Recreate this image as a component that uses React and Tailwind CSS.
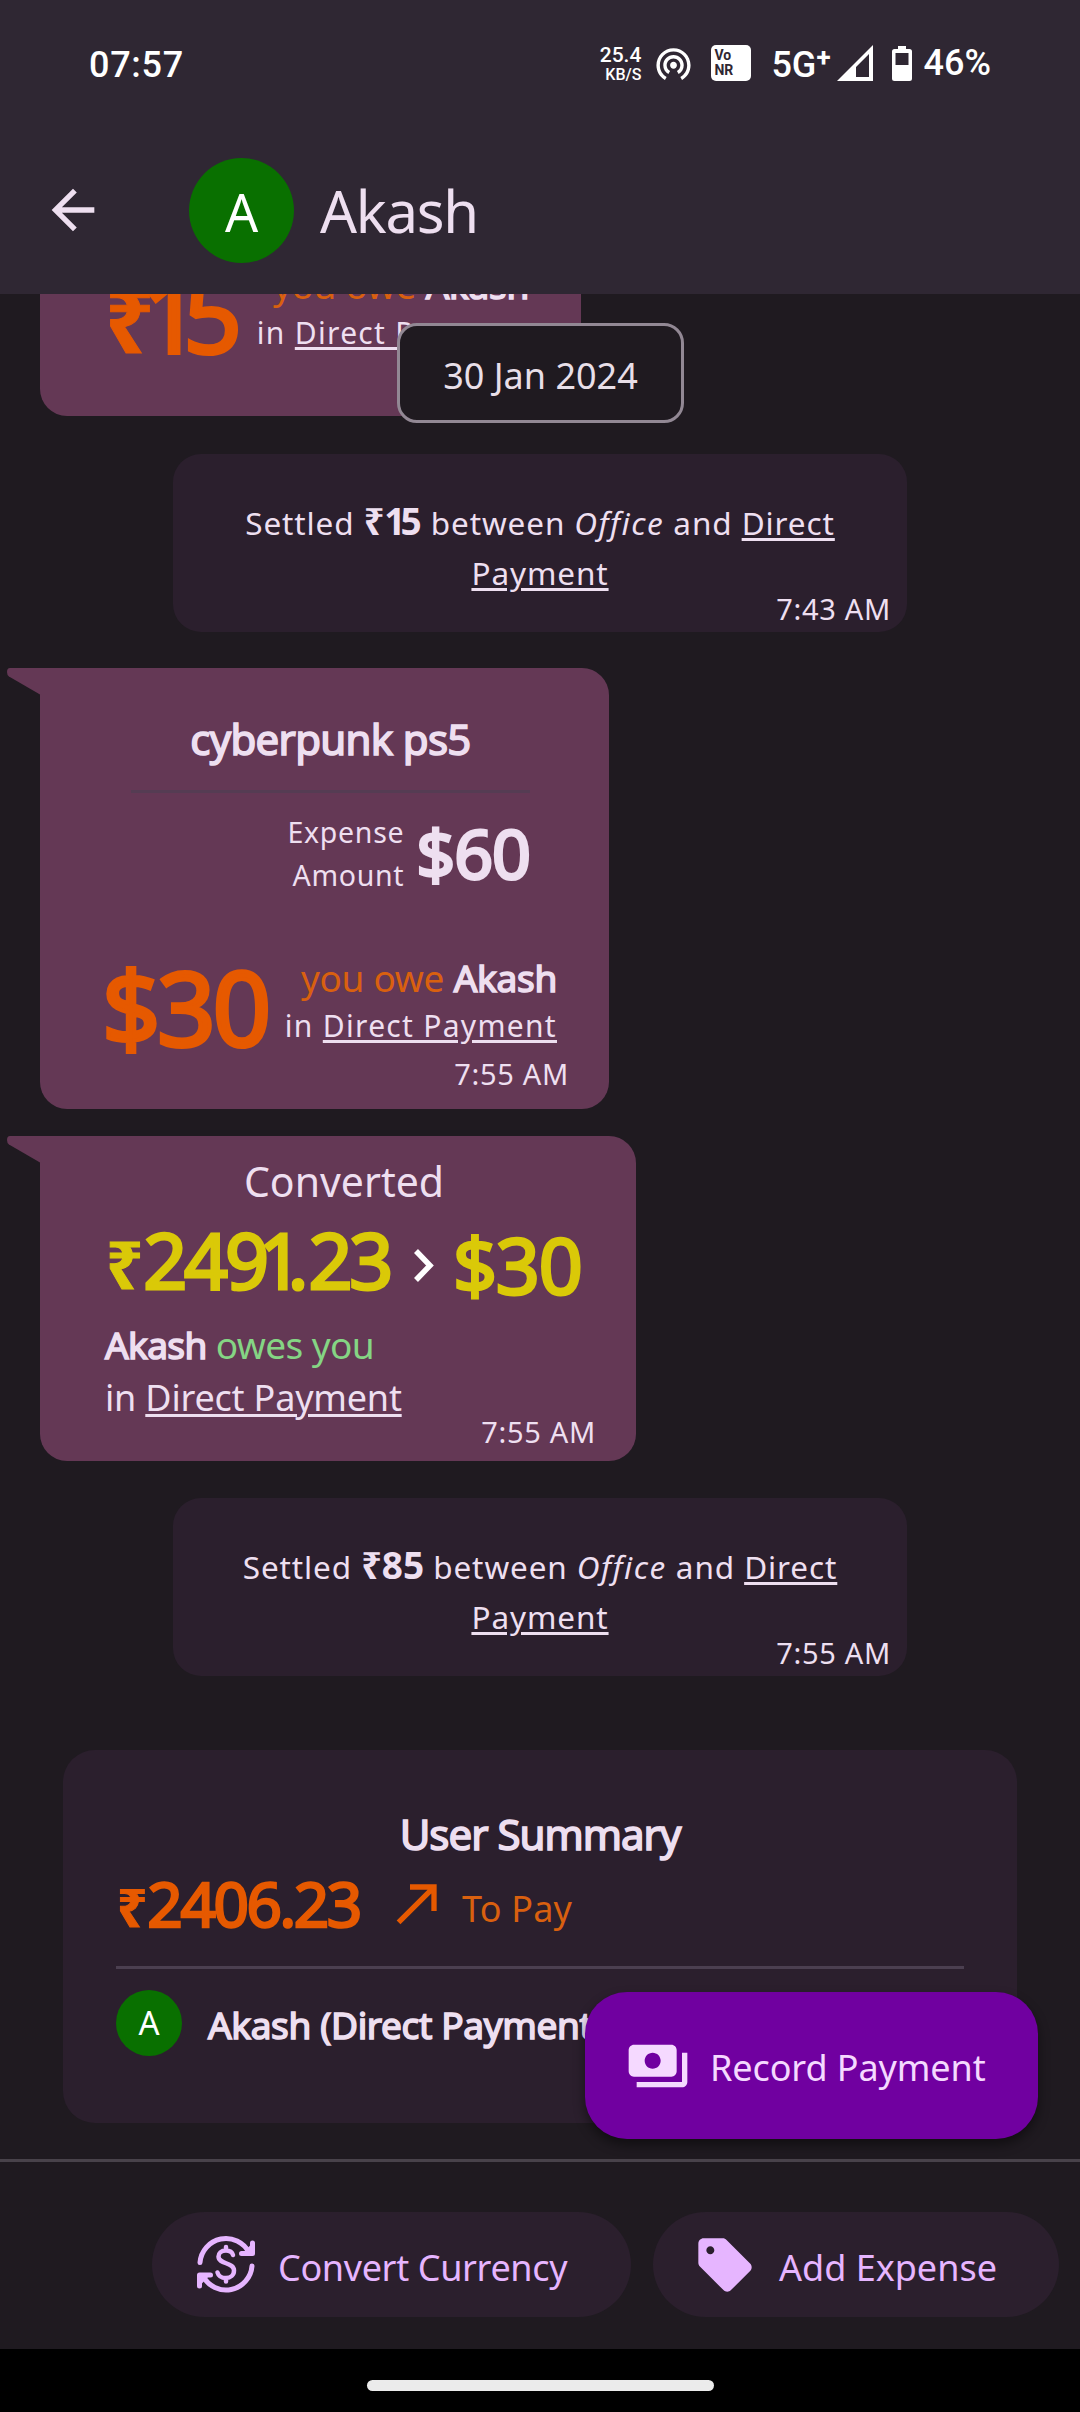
import React from "react";
import { MdArrowBack, MdCallMade, MdPayments, MdSell, MdWifiTethering } from "react-icons/md";

function Tail() {
  return (
    <svg className="absolute top-0 -left-[33px] w-[35px] h-[27px]" viewBox="0 0 35 27" fill="#643855">
      <path d="M3 0H35V27L33 26.5L2 8.5Q0 7 0 4Q0 0 3 0Z" />
    </svg>
  );
}

function CurrencyIcon() {
  return (
    <svg className="h-[60px] w-[60px] shrink-0" viewBox="0 0 60 60" fill="none" stroke="currentColor" strokeWidth="5" strokeLinecap="round" strokeLinejoin="round">
      <path d="M3 27.500A26 26 0 0 1 52 17.500" />
      <path d="M55.500 8V19H45Z" fill="currentColor" stroke="none" />
      <path d="M55.500 8V18.500H44.500" />
      <path d="M55 31A26 26 0 0 1 6 41" />
      <path d="M2.500 51V40H13Z" fill="currentColor" stroke="none" />
      <path d="M2.500 51V40H13.500" />
      <path strokeWidth="4.500" d="M36 20C35 16.500 32 15.500 29 15.500C24 15.500 21.500 18.500 21.500 21.500C21.500 29.500 37 27 37 35.500C37 40 33.500 43 29 43C25 43 21.500 41 20.500 37.500M29 12V15.500M29 43V46.500" />
    </svg>
  );
}

function Time({ children }) {
  return <div className="h-[28px] text-right text-[29px] leading-[28px] tracking-[0.7px]">{children}</div>;
}

function Linked({ children }) {
  return <span className="underline decoration-[3px] underline-offset-[3px]">{children}</span>;
}

function Debt({ amount }) {
  return (
    <div className="mt-auto shrink-0 pb-[21px] whitespace-nowrap">
      <div className="flex h-[108px] justify-between pl-[62px] pr-[52px]">
        <div className="text-[102px] leading-[110px] tracking-[-3px] text-[#e65900] [-webkit-text-stroke:4px_#e65900]">{amount}</div>
        <div className="pt-[3px] text-right">
          <div className="h-[48px] text-[37px] leading-[45px]">
            <span className="tracking-[-0.3px] text-[#d9600f]">you owe</span>{" "}
            <span className="tracking-[-0.3px] [-webkit-text-stroke:1.6px_#eedff0]">Akash</span>
          </div>
          <div className="h-[45px] text-[30px] leading-[45px] tracking-[1.3px]">
            in <Linked>Direct Payment</Linked>
          </div>
        </div>
      </div>
      <div className="pr-[40px]">
        <Time>7:55 AM</Time>
      </div>
    </div>
  );
}

function Settled({ amount, time, className }) {
  return (
    <div className={`mx-auto h-[178px] w-[734px] shrink-0 rounded-[28px] bg-[#2b1f2d] pt-[44px] ${className}`}>
      <div className="text-center text-[31.5px] leading-[50px] tracking-[0.9px] whitespace-nowrap">
        Settled{" "}
        <b className="text-[37px] leading-none tracking-[0px]"><span className="text-[36px]">₹</span>{amount}</b>{" "}
        between <i className="tracking-[1.5px]">Office</i> and <Linked>Direct</Linked>
        <br />
        <Linked>Payment</Linked>
      </div>
      <div className="-mt-[3px] pr-[16px]">
        <Time>{time}</Time>
      </div>
    </div>
  );
}

export default function App() {
  return (
    <div className="relative flex h-[2412px] w-[1080px] flex-col overflow-hidden bg-[#1f1a20] font-['Noto_Sans',sans-serif] text-[#eedff0]">
      <header className="h-[294px] shrink-0 bg-[#2f2733]">
        <div className="flex h-[126px] items-center pl-[89px] font-['Roboto',sans-serif] font-medium text-white">
          <span className="pt-[4px] text-[36px] tracking-[0.7px]">07:57</span>
          <div className="ml-auto flex flex-col items-end leading-none">
            <span className="text-[21px] leading-[22px]">25.4</span>
            <span className="text-[16px] leading-[17px]">KB/S</span>
          </div>
          <MdWifiTethering className="ml-[12px] size-[41px]" />
          <div className="ml-[17px] h-[36px] w-[40px] rounded-[5px] bg-white pt-[3px] pl-[3px] text-[14px] leading-[15px] font-bold text-[#2f2733]">
            Vo<br />NR
          </div>
          <span className="ml-[20px] pt-[4px] text-[36px]">5G</span>
          <span className="mb-[12px] text-[26px] font-bold">+</span>
          <svg className="ml-[6px] size-[36px]" viewBox="0 0 36 36"><path fill="#fff" fillRule="evenodd" d="M36 0V36H0ZM32 9V32H19V22Z" /></svg>
          <svg className="ml-[19px] h-[35px] w-[20px]" viewBox="0 0 20 35"><path fill="#fff" fillRule="evenodd" d="M6 0H14V3H17.500Q20 3 20 5.500V32.500Q20 35 17.500 35H2.500Q0 35 0 32.500V5.500Q0 3 2.500 3H6ZM3.500 7V19H16.500V7Z" /></svg>
          <span className="mr-[89px] ml-[12px] text-[36px]">46%</span>
        </div>
        <div className="flex h-[168px] items-center pl-[41px]">
          <MdArrowBack className="size-[64px]" />
          <div className="ml-[84px] flex size-[105px] items-center justify-center rounded-full bg-[#097000] pt-[4px] text-[52px] text-white">A</div>
          <span className="ml-[26px] text-[58px] tracking-[-1.3px]">Akash</span>
        </div>
      </header>

      <main className="relative flex h-[1865px] shrink-0 flex-col overflow-hidden">
        <div className="ml-[40px] flex h-[122px] w-[541px] shrink-0 flex-col justify-end rounded-b-[27px] bg-[#643855]">
          <Debt amount={<span className="ml-[3px]"><b className="text-[86px] leading-none tracking-[-4px] [-webkit-text-stroke:1px_#e65900]">₹</b><span className="-ml-[8px] tracking-[-17px]">1</span>5</span>} />
        </div>

        <Settled amount={<><span className="tracking-[-5px]">1</span>5</>} time="7:43 AM" className="mt-[38px]" />

        <div className="relative mt-[36px] ml-[40px] flex h-[441px] w-[569px] shrink-0 flex-col rounded-[27px] rounded-tl-none bg-[#643855] pt-[41px]">
          <Tail />
          <div className="ml-[91px] w-[399px]">
            <div className="text-center text-[42px] leading-[60px] tracking-[-0.7px] [-webkit-text-stroke:1.6px_#eedff0]">cyberpunk ps5</div>
            <div className="mt-[21px] h-[3px] bg-[#553c53]" />
            <div className="mt-[18px] flex h-[85px] justify-end gap-[12px]">
              <div className="text-right text-[28.5px] leading-[42.500px] tracking-[0.7px]">Expense<br />Amount</div>
              <span className="text-[68px] leading-[83px] tracking-[-1px] [-webkit-text-stroke:3px_#eedff0]">$60</span>
            </div>
          </div>
          <Debt amount="$30" />
        </div>

        <div className="relative mt-[27px] ml-[40px] h-[325px] w-[596px] shrink-0 rounded-[27px] rounded-tl-none bg-[#643855] pt-[17px]">
          <Tail />
          <div className="ml-[65px] w-[478px] whitespace-nowrap">
            <div className="text-center text-[41px] leading-[56px]">Converted</div>
            <div className="mt-[11px] flex h-[84px] text-[77px] leading-[80px] tracking-[-3.2px] text-[#dac908] [-webkit-text-stroke:3px_#dac908]">
              <span className="ml-[1px] w-[308px]"><b className="text-[65px] leading-none tracking-[0px] [-webkit-text-stroke:1px_#dac908]">₹</b>249<span className="-ml-[7px] tracking-[-15px]">1</span><span className="tracking-[0px]">.</span>23</span>
              <svg className="mt-[29px] h-[33px] w-[20px] shrink-0" viewBox="0 0 20 33" fill="none" stroke="#fff" strokeWidth="5.500"><path d="M2 2L16 16.500L2 31" /></svg>
              <span className="mt-[5px] ml-[19px] tracking-[-1.2px]">$30</span>
            </div>
            <div className="mt-[14px] h-[53px] text-[37px] leading-[53px] tracking-[-0.6px]">
              <span className="[-webkit-text-stroke:1.6px_#eedff0]">Akash</span>{" "}
              <span className="text-[#85d584]">owes you</span>
            </div>
            <div className="h-[53px] text-[36px] leading-[53px] tracking-[-0.2px]">in <Linked>Direct Payment</Linked></div>
          </div>
          <div className="-mt-[6px] pr-[40px]"><Time>7:55 AM</Time></div>
        </div>

        <Settled amount="85" time="7:55 AM" className="mt-[37px]" />

        <section className="mx-[63px] mt-[74px] h-[373px] shrink-0 rounded-[32px] bg-[#2b1f2d] px-[53px] pt-[54px] whitespace-nowrap">
          <div className="text-center text-[42px] leading-[60px] tracking-[-1px] [-webkit-text-stroke:1.6px_#eedff0]">User Summary</div>
          <div className="-mt-[1px] flex h-[80px] items-center text-[#e65900]">
            <span className="ml-[1px] w-[247px] text-[62px] leading-[80px] tracking-[-2.4px] [-webkit-text-stroke:2.5px_#e65900]"><b className="text-[53px] leading-none tracking-[0px] [-webkit-text-stroke:1px_#e65900]">₹</b>2406.23</span>
            <MdCallMade className="ml-[22px] size-[64px] shrink-0" />
            <span className="ml-[12px] pt-[12px] text-[36px] tracking-[0.2px] text-[#d9600f]">To Pay</span>
          </div>
          <div className="mt-[23px] h-[3px] bg-[#4b3f50]" />
          <div className="mt-[21px] flex">
            <div className="flex size-[66px] shrink-0 items-center justify-center rounded-full bg-[#097000] text-[33px] text-white">A</div>
            <span className="ml-[26px] pt-[2px] text-[37px] leading-[66px] tracking-[-0.35px] [-webkit-text-stroke:1.6px_#eedff0]">Akash (Direct Payment)</span>
          </div>
        </section>

        <div className="absolute top-[29px] left-[397px] flex h-[100px] w-[287px] items-center justify-center rounded-[20px] border-[3px] border-[#928894] bg-[#1f1a20] pt-[5px] text-[36px] text-[#e8dfe8]">30 Jan 2024</div>

        <button className="absolute top-[1698px] left-[585px] flex h-[147px] w-[453px] items-center rounded-[42px] bg-[#7000a0] pl-[41px] text-[36px] tracking-[-0.1px] whitespace-nowrap text-[#f5d9ff] shadow-[0_6px_12px_rgba(0,0,0,0.45)]">
          <MdPayments className="size-[64px]" />
          <span className="ml-[20px] pt-[4px]">Record Payment</span>
        </button>
      </main>

      <div className="h-[3px] shrink-0 bg-[#48424a]" />
      <footer className="flex h-[187px] shrink-0 items-start justify-end gap-[22px] pt-[50px] pr-[21px] text-[36px] whitespace-nowrap text-[#e6b5ff]">
        <button className="flex h-[105px] w-[479px] items-center rounded-full bg-[#2b1f2d] pl-[45px] tracking-[-0.35px]">
          <CurrencyIcon />
          <span className="ml-[21px] pt-[6px]">Convert Currency</span>
        </button>
        <button className="flex h-[105px] w-[406px] items-center rounded-full bg-[#2b1f2d] pl-[40px]">
          <MdSell className="size-[64px]" />
          <span className="ml-[22px] pt-[6px]">Add Expense</span>
        </button>
      </footer>
      <div className="flex h-[63px] shrink-0 justify-center bg-black pt-[31px]">
        <div className="h-[11px] w-[347px] rounded-full bg-[#ebebeb]" />
      </div>
    </div>
  );
}
